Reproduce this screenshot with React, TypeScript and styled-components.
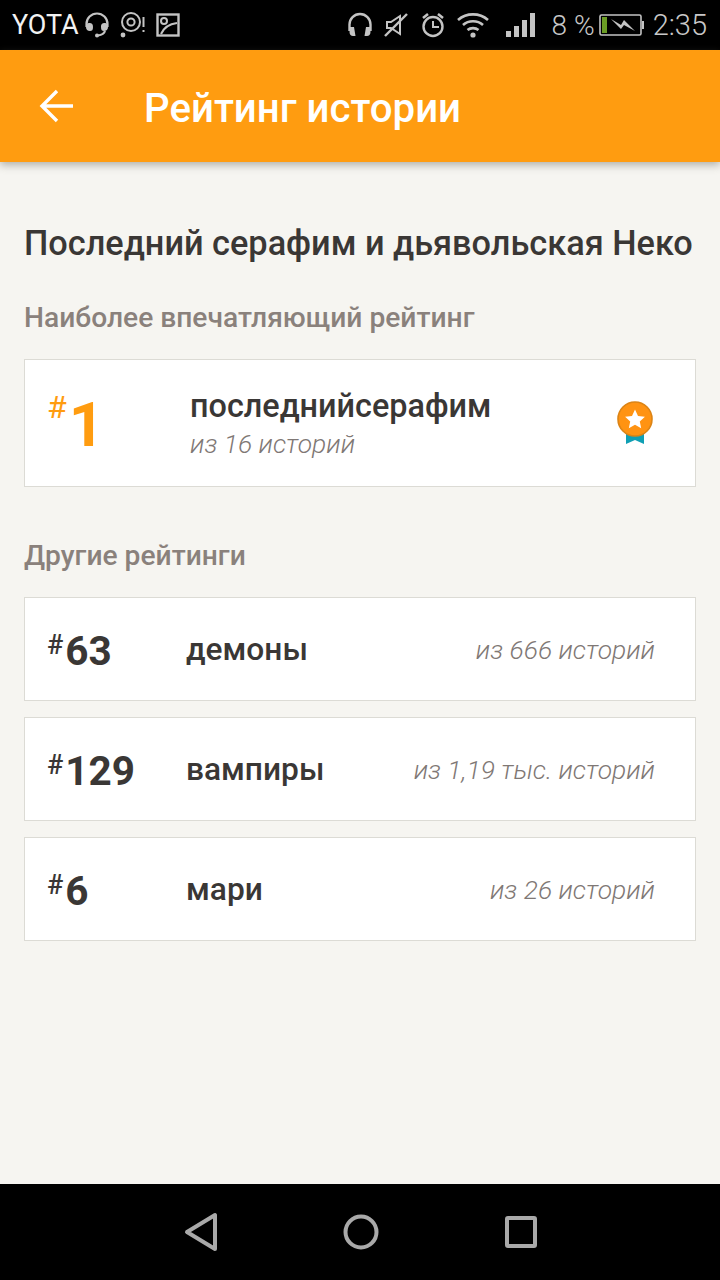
import React from 'react';
import styled, { createGlobalStyle } from 'styled-components';

const GlobalStyle = createGlobalStyle`
  html, body {
    margin: 0;
    padding: 0;
    background: #000;
  }
  body {
    font-family: Roboto, "Noto Sans", sans-serif;
  }
`;

const Screen = styled.div`
  width: 720px;
  height: 1280px;
  display: flex;
  flex-direction: column;
  overflow: hidden;
  background: #f6f5f1;
`;

const StatusBar = styled.div`
  height: 50px;
  flex: none;
  display: flex;
  align-items: center;
  justify-content: space-between;
  padding: 0 12px;
  background: #000;
  color: #c4c4c4;
`;

const StatusGroup = styled.div`
  display: flex;
  align-items: center;
`;

const Carrier = styled.span`
  font-size: 27px;
  color: #f2f2f2;
  margin-right: 5px;
`;

const StatusText = styled.span<{ $size: number; $left?: number; $right?: number }>`
  font-size: ${p => p.$size}px;
  font-weight: 300;
  color: #c8c8c8;
  margin-left: ${p => p.$left ?? 0}px;
  margin-right: ${p => p.$right ?? 0}px;
`;

const StatusIcon = styled.svg<{ $left?: number }>`
  display: block;
  flex: none;
  margin-left: ${p => p.$left ?? 0}px;
`;

const Toolbar = styled.header`
  height: 112px;
  flex: none;
  display: flex;
  align-items: center;
  padding: 0 0 0 39px;
  background: #ff9c10;
  box-shadow: 0 3px 8px rgba(90, 90, 80, 0.45);
  position: relative;
`;

const ToolbarTitle = styled.h1`
  margin: 6px 0 0 69px;
  font-size: 40.2px;
  line-height: 42px;
  font-weight: 500;
  color: #fff;
`;

const Content = styled.main`
  flex: 1;
  padding: 61px 24px 0;
`;

const StoryTitle = styled.h2`
  margin: 0;
  font-size: 34.3px;
  line-height: 40px;
  font-weight: 500;
  color: #3a3735;
  white-space: nowrap;
`;

const SectionTitle = styled.h3<{ $top: number }>`
  margin: ${p => p.$top}px 0 0;
  font-size: 28.2px;
  line-height: 32px;
  font-weight: 500;
  color: #8a817c;
`;

const Card = styled.section`
  box-sizing: border-box;
  margin-top: 25px;
  height: 128px;
  display: flex;
  align-items: center;
  padding: 0 41px 0 22px;
  background: #fff;
  border: 1px solid #dcdbd5;
`;

const RankList = styled.div`
  margin-top: 25px;
  display: flex;
  flex-direction: column;
  gap: 16px;
`;

const RankRow = styled.div`
  box-sizing: border-box;
  height: 104px;
  display: flex;
  align-items: center;
  padding: 2px 40px 0 22px;
  background: #fff;
  border: 1px solid #dcdbd5;
`;

const Rank = styled.div<{ $width: number }>`
  flex: none;
  width: ${p => p.$width}px;
  display: flex;
  align-items: flex-start;
`;

const Hash = styled.span<{ $top: boolean }>`
  font-size: ${p => (p.$top ? 32 : 27)}px;
  line-height: ${p => (p.$top ? 34 : 30)}px;
  font-weight: ${p => (p.$top ? 400 : 500)};
  color: ${p => (p.$top ? '#ff9c10' : '#3a3735')};
  margin-top: ${p => (p.$top ? -2 : 2)}px;
`;

const RankNumber = styled.span<{ $top: boolean }>`
  font-size: ${p => (p.$top ? 62 : 40.5)}px;
  line-height: ${p => (p.$top ? 60 : 44)}px;
  font-weight: 700;
  color: ${p => (p.$top ? '#ff9c10' : '#3a3735')};
  margin-left: 2px;
  margin-top: ${p => (p.$top ? 3 : 1)}px;
`;

const TopInfo = styled.div`
  flex: 1;
  display: flex;
  flex-direction: column;
  padding-top: 3px;
`;

const TopName = styled.div`
  font-size: 32.4px;
  line-height: 38px;
  font-weight: 500;
  color: #3a3735;
`;

const OutOf = styled.span`
  font-size: 26.4px;
  line-height: 38px;
  font-weight: 300;
  font-style: italic;
  color: #7f7875;
`;

const RowName = styled.div`
  flex: 1;
  font-size: 31.7px;
  line-height: 38px;
  font-weight: 500;
  color: #3a3735;
`;

const NavBar = styled.nav`
  height: 96px;
  flex: none;
  display: grid;
  grid-template-columns: repeat(3, 160px);
  align-items: center;
  justify-items: center;
  justify-content: center;
  padding-left: 2px;
  box-sizing: border-box;
  background: #000;
`;

const BackArrow = () => (
  <svg width="36" height="36" viewBox="0 0 36 36" fill="none" stroke="#fff" strokeWidth="3.4">
    <path d="M34 18H4M18 3 3 18l15 15" />
  </svg>
);

const Medal = () => (
  <svg width="38" height="46" viewBox="0 0 38 46">
    <path d="M10 28h18v16l-9-4-9 4z" fill="#0f9fb4" />
    <circle cx="19" cy="19" r="17" fill="#ff9312" stroke="#dc8415" strokeWidth="1.6" />
    <path d="M19 9.5l3 6.4 6.9.8-5.1 4.7 1.4 6.8-6.2-3.5-6.2 3.5 1.4-6.8-5.1-4.7 6.9-.8z" fill="#fff" />
  </svg>
);

const others = [
  { rank: '63', name: 'демоны', total: 'из 666 историй' },
  { rank: '129', name: 'вампиры', total: 'из 1,19 тыс. историй' },
  { rank: '6', name: 'мари', total: 'из 26 историй' },
];

export default function App() {
  return (
    <Screen>
      <GlobalStyle />
      <StatusBar>
        <StatusGroup>
          <Carrier>YOTA</Carrier>
          <StatusIcon width="26" height="26" viewBox="0 0 26 26" fill="none" stroke="#c4c4c4" strokeWidth="2.2">
            <path d="M2.5 15v-3a10.5 10.5 0 0 1 21 0v3" />
            <path d="M5 11c3 0 4 1 4 4s-1 4-3 4c-2.5 0-4-1.5-4-4s1-4 3-4zM21 11c-3 0-4 1-4 4s1 4 3 4c2.5 0 4-1.5 4-4s-1-4-3-4z" fill="#c4c4c4" stroke="none" />
            <path d="M21 19c-1 3-4 4-7 4.5" />
            <circle cx="13" cy="23.5" r="2" fill="#c4c4c4" stroke="none" />
          </StatusIcon>
          <StatusIcon $left={10} width="26" height="26" viewBox="0 0 26 26" fill="none" stroke="#c4c4c4" strokeWidth="2">
            <circle cx="11" cy="10" r="9" />
            <circle cx="11" cy="10" r="3.6" />
            <circle cx="3" cy="23" r="2.4" fill="#c4c4c4" stroke="none" />
            <path d="M23.5 5v10M23.5 18v2" />
          </StatusIcon>
          <StatusIcon $left={10} width="24" height="24" viewBox="0 0 24 24" fill="none" stroke="#c4c4c4" strokeWidth="2.4">
            <rect x="1.5" y="1.5" width="21" height="21" />
            <circle cx="8" cy="8" r="3" strokeWidth="2" />
            <path d="M5 21c3-7 8-10 16-11" strokeWidth="2" />
          </StatusIcon>
        </StatusGroup>
        <StatusGroup>
          <StatusIcon width="26" height="26" viewBox="0 0 26 26" fill="none" stroke="#c4c4c4" strokeWidth="2.4">
            <path d="M2.5 19v-6.5a10.5 10.5 0 0 1 21 0V19" />
            <path d="M3 15h4l1.5 9H6c-2 0-3.5-1.5-3.5-4zM23 15h-4l-1.5 9H20c2 0 3.5-1.5 3.5-4z" fill="#c4c4c4" stroke="none" />
          </StatusIcon>
          <StatusIcon $left={11} width="24" height="24" viewBox="0 0 24 24" fill="none" stroke="#c4c4c4" strokeWidth="2">
            <path d="M3 9h4l9-6v18l-9-6H3z" />
            <path d="M1 23 23 1" strokeWidth="2.4" />
          </StatusIcon>
          <StatusIcon $left={13} width="24" height="26" viewBox="0 0 24 26" fill="none" stroke="#c4c4c4" strokeWidth="2.4">
            <circle cx="12" cy="14.5" r="9.5" />
            <path d="M12 9v6h6" strokeWidth="2" />
            <path d="M2 6l5-4M22 6l-5-4" strokeWidth="2.6" />
          </StatusIcon>
          <StatusIcon $left={12} width="32" height="26" viewBox="0 0 32 26" fill="none" stroke="#c4c4c4" strokeWidth="2.6">
            <path d="M1 8c8.5-7.5 21.5-7.5 30 0M6 13c5.5-5 14.5-5 20 0M10.5 18c3-2.5 8-2.5 11 0" />
            <circle cx="16" cy="23" r="2.6" fill="#c4c4c4" stroke="none" />
          </StatusIcon>
          <StatusIcon $left={17} width="30" height="26" viewBox="0 0 30 26" fill="#c4c4c4">
            <rect x="0" y="19" width="5" height="6" />
            <rect x="8" y="14" width="5" height="11" />
            <rect x="16" y="8" width="5" height="17" />
            <rect x="24" y="1" width="5" height="24" />
          </StatusIcon>
          <StatusText $size={28} $left={16} $right={4}>8 %</StatusText>
          <StatusIcon width="46" height="24" viewBox="0 0 46 24" fill="none">
            <rect x="1" y="2" width="41" height="20" rx="1.5" stroke="#c4c4c4" strokeWidth="1.6" />
            <rect x="3" y="4" width="5" height="16" fill="#6b9d25" />
            <path d="M12 6l10 6 3-5 11 11-11-6-3 4z" fill="#c4c4c4" />
            <rect x="43" y="8" width="2" height="8" fill="#c4c4c4" />
          </StatusIcon>
          <StatusText $size={29} $left={8} $right={1}>2:35</StatusText>
        </StatusGroup>
      </StatusBar>

      <Toolbar>
        <BackArrow />
        <ToolbarTitle>Рейтинг истории</ToolbarTitle>
      </Toolbar>

      <Content>
        <StoryTitle>Последний серафим и дьявольская Неко</StoryTitle>
        <SectionTitle $top={39}>Наиболее впечатляющий рейтинг</SectionTitle>
        <Card>
          <Rank $width={143}>
            <Hash $top>#</Hash>
            <RankNumber $top>1</RankNumber>
          </Rank>
          <TopInfo>
            <TopName>последнийсерафим</TopName>
            <OutOf>из 16 историй</OutOf>
          </TopInfo>
          <Medal />
        </Card>
        <SectionTitle $top={53}>Другие рейтинги</SectionTitle>
        <RankList>
          {others.map(item => (
            <RankRow key={item.name}>
              <Rank $width={139}>
                <Hash $top={false}>#</Hash>
                <RankNumber $top={false}>{item.rank}</RankNumber>
              </Rank>
              <RowName>{item.name}</RowName>
              <OutOf>{item.total}</OutOf>
            </RankRow>
          ))}
        </RankList>
      </Content>

      <NavBar>
        <svg width="36" height="40" viewBox="0 0 36 40" fill="none" stroke="#a9a9a9" strokeWidth="4" strokeLinejoin="round">
          <path d="M32 3v34L4 20z" />
        </svg>
        <svg width="36" height="36" viewBox="0 0 36 36" fill="none" stroke="#a9a9a9" strokeWidth="4">
          <circle cx="18" cy="18" r="15.5" />
        </svg>
        <svg width="32" height="32" viewBox="0 0 32 32" fill="none" stroke="#a9a9a9" strokeWidth="4" strokeLinejoin="round">
          <rect x="2" y="2" width="28" height="28" rx="1" />
        </svg>
      </NavBar>
    </Screen>
  );
}
